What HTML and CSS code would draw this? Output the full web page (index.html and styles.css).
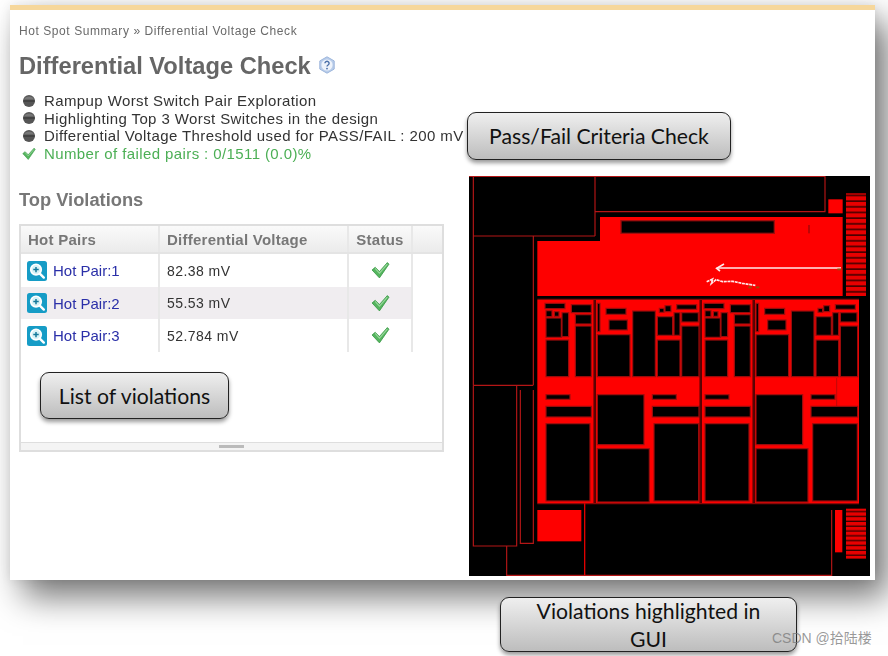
FILE: index.html
```html
<!DOCTYPE html>
<html lang="en">
<head>
<meta charset="utf-8">
<title>Differential Voltage Check</title>
<link rel="stylesheet" href="styles.css">
</head>
<body>
<svg class="defs" width="0" height="0" aria-hidden="true">
  <defs>
    <symbol id="bullet" viewBox="0 0 14 14"><circle cx="7" cy="7" r="6" fill="#555"/><path d="M2 5.5a5.2 4 0 0 1 10 0z" fill="#777"/><path d="M1.2 7h11.6" stroke="#333" stroke-width="1"/></symbol>
    <symbol id="check" viewBox="0 0 18 18"><path d="M1 8.5l3-2.5 4 4L15.5 1.5 17 3 8 16z" fill="#55b55f" stroke="#3c9a48" stroke-width=".8" stroke-linejoin="round"/><path d="M4 7l4 4.5L15.5 3" fill="none" stroke="#9ad89d" stroke-width="1"/></symbol>
    <symbol id="zoom" viewBox="0 0 20 20"><rect width="20" height="20" rx="2.5" fill="#169cc6"/><circle cx="9" cy="8.6" r="5.3" fill="#d8f2f6" stroke="#fff" stroke-width="1.6"/><path d="M6.3 8.6h5.4M9 5.9v5.4" stroke="#14799a" stroke-width="1.5"/><path d="M12.8 12.6l4 4" stroke="#fff" stroke-width="2.4" stroke-linecap="round"/></symbol>
    <pattern id="stripes-top" width="60" height="17" patternUnits="userSpaceOnUse"><rect width="60" height="17" fill="#e80000"/><rect y="12" width="60" height="5" fill="#4a0000"/></pattern>
    <pattern id="stripes-bottom" width="60" height="14.5" patternUnits="userSpaceOnUse"><rect width="60" height="14.5" fill="#e80000"/><rect y="10.5" width="60" height="4" fill="#3a0000"/></pattern>
    <g id="col-a">
      <rect x="255" y="40" width="60" height="16"/><rect x="334" y="44" width="60" height="24"/>
      <rect x="258" y="62" width="18" height="18"/><rect x="283" y="65" width="14" height="14"/>
      <rect x="258" y="84" width="46" height="58"/><rect x="306" y="68" width="20" height="72"/>
      <rect x="346" y="74" width="48" height="28"/><rect x="346" y="108" width="48" height="152"/>
      <rect x="258" y="150" width="68" height="110"/><rect x="258" y="314" width="72" height="14"/>
      <rect x="258" y="349" width="136" height="32"/><rect x="258" y="401" width="132" height="232"/>
    </g>
    <g id="col-b">
      <rect x="412" y="40" width="8" height="85"/><rect x="438" y="55" width="60" height="18"/>
      <rect x="447" y="90" width="55" height="30"/><rect x="518" y="63" width="68" height="197"/>
      <rect x="412" y="134" width="98" height="126"/><rect x="598" y="55" width="14" height="12"/>
      <rect x="615" y="47" width="18" height="18"/><rect x="650" y="44" width="60" height="14"/>
      <rect x="592" y="80" width="46" height="56"/><rect x="642" y="68" width="18" height="68"/>
      <rect x="665" y="68" width="50" height="28"/><rect x="665" y="108" width="52" height="152"/>
      <rect x="592" y="150" width="68" height="110"/><rect x="412" y="314" width="140" height="150"/>
      <rect x="577" y="314" width="72" height="14"/><rect x="577" y="349" width="140" height="32"/>
      <rect x="412" y="476" width="156" height="160"/><rect x="582" y="401" width="134" height="232"/>
    </g>
  </defs>
</svg>

<div class="page">
  <main class="sheet">
    <section class="report">
      <p class="crumbs">Hot Spot Summary » Differential Voltage Check</p>
      <h1 class="title">Differential Voltage Check
        <svg class="help" viewBox="0 0 18 18" aria-hidden="true"><path d="M9 .8l7.2 4.1v8.2L9 17.2 1.8 13.1V4.9z" fill="#b9cdea" stroke="#9db6dc"/><circle cx="9" cy="9" r="5.6" fill="#eef3fb"/><path d="M6.9 7.2a2.1 2 0 1 1 3.2 1.8c-.8.5-1.1.8-1.1 1.6" fill="none" stroke="#4a6fa8" stroke-width="1.4"/><circle cx="9" cy="12.6" r=".9" fill="#4a6fa8"/></svg>
      </h1>
      <ul class="facts">
        <li class="fact"><svg class="fact-icon"><use href="#bullet"/></svg>Rampup Worst Switch Pair Exploration</li>
        <li class="fact"><svg class="fact-icon"><use href="#bullet"/></svg>Highlighting Top 3 Worst Switches in the design</li>
        <li class="fact"><svg class="fact-icon"><use href="#bullet"/></svg>Differential Voltage Threshold used for PASS/FAIL : 200 mV</li>
        <li class="fact fact-ok"><svg class="fact-icon"><use href="#check"/></svg>Number of failed pairs : 0/1511 (0.0)%</li>
      </ul>
      <h2 class="subtitle">Top Violations</h2>
      <div class="grid-panel">
        <div class="grid-body">
          <div class="grid-row grid-head">
            <div class="cell">Hot Pairs</div><div class="cell">Differential Voltage</div><div class="cell cell-center">Status</div><div class="cell cell-pad"></div>
          </div>
          <div class="grid-row">
            <div class="cell cell-link"><svg class="zoom-icon"><use href="#zoom"/></svg><a class="pair-link">Hot Pair:1</a></div><div class="cell">82.38 mV</div><div class="cell cell-center"><svg class="status-icon"><use href="#check"/></svg></div>
          </div>
          <div class="grid-row grid-row-alt">
            <div class="cell cell-link"><svg class="zoom-icon"><use href="#zoom"/></svg><a class="pair-link">Hot Pair:2</a></div><div class="cell">55.53 mV</div><div class="cell cell-center"><svg class="status-icon"><use href="#check"/></svg></div>
          </div>
          <div class="grid-row">
            <div class="cell cell-link"><svg class="zoom-icon"><use href="#zoom"/></svg><a class="pair-link">Hot Pair:3</a></div><div class="cell">52.784 mV</div><div class="cell cell-center"><svg class="status-icon"><use href="#check"/></svg></div>
          </div>
        </div>
        <div class="grid-foot"><span class="grip"></span></div>
      </div>
    </section>

    <svg class="chip" viewBox="0 0 1203 1200" aria-label="Layout view with violations highlighted in red">
      <rect width="1203" height="1200" fill="#000"/>
      <g transform="translate(-27,-228)">
        <g fill="none" stroke="#b41616" stroke-width="3.5">
          <path d="M27 229H1095V335H405M405 229V408M40 229V855M40 408H405M220 408V855"/>
        </g>
        <rect x="1105" y="298" width="43" height="42" fill="#fe0000"/>
        <rect x="1158" y="280" width="60" height="308" fill="url(#stripes-top)"/>
        <path d="M420 351H1148V588H232V423H420z" fill="#fe0000"/>
        <rect x="483" y="362" width="460" height="38" fill="#000" stroke="#a00c0c" stroke-width="4"/>
        <path d="M1047 375v25" stroke="#7a0a0a" stroke-width="3"/>
        <path d="M770 504H1143" stroke="#ffeaea" stroke-width="4.5"/>
        <path d="M792 492L770 505l10 8" fill="none" stroke="#ffeaea" stroke-width="5"/>
        <path d="M740 545l18-8-4 14 14-12 20 6 30-1 28 6 40 6" fill="none" stroke="#ffeaea" stroke-width="5" stroke-dasharray="9 2"/>
        <path d="M1132 508h12M865 562h10M888 562h10" stroke="#96500a" stroke-width="5"/>
      </g>
      <g transform="translate(-27,342)">
        <rect x="232" y="30" width="965" height="610" fill="#fe0000"/>
        <g fill="#000" stroke="#a00c0c" stroke-width="3.5">
          <use href="#col-a"/>
          <use href="#col-b"/>
          <use href="#col-a" transform="translate(477,0)"/>
          <use href="#col-b" transform="translate(476,0)"/>
        </g>
        <path d="M404 30V642M722 30V642M881 30V642" stroke="#000" stroke-width="6"/>
        <path d="M404 30V642M722 30V642M881 30V642M1130 264V348" stroke="#a00c0c" stroke-width="2"/>
        <path d="M232 28H1197M232 641H1197" stroke="#8a0808" stroke-width="3.5"/>
        <g fill="none" stroke="#b41616" stroke-width="3.5">
          <path d="M40 286H220M40 286V768H170V286M181 300V760H220V300"/>
          <path d="M140 768V856H1115V660"/>
        </g>
        <path d="M374 640V856" stroke="#e00000" stroke-width="4"/>
        <rect x="232" y="660" width="132" height="94" fill="#fe0000"/>
        <rect x="1125" y="660" width="22" height="127" fill="#fe0000"/>
        <rect x="1158" y="656" width="60" height="150" fill="url(#stripes-bottom)"/>
      </g>
    </svg>
  </main>

  <div class="callout callout-criteria">Pass/Fail Criteria Check</div>
  <div class="callout callout-list">List of violations</div>
  <div class="callout callout-gui">Violations highlighted in GUI</div>
  <div class="watermark">CSDN @拾陆楼</div>
</div>
</body>
</html>
```

FILE: styles.css
```css
* { box-sizing: border-box; }
html, body { margin: 0; padding: 0; background: #fff; }
body { font-family: "Liberation Sans", Arial, sans-serif; overflow: hidden; }
.defs { position: absolute; }
.page { position: relative; width: 888px; height: 656px; overflow: hidden; padding: 5px 13px 0 10px; }

.sheet {
  display: flex;
  align-items: flex-start;
  gap: 25px;
  height: 575px;
  padding: 0 5px 0 9px;
  background: #fff;
  border-top: 5px solid #f6d79b;
  box-shadow: 13px 17px 32px rgba(0, 0, 0, .54), 0 0 10px rgba(0, 0, 0, .08);
}

.report { flex: 0 0 425px; min-width: 0; filter: blur(.4px); }
.crumbs { margin: 13px 0 0; font-size: 12px; line-height: 16px; color: #6a6a6a; letter-spacing: .57px; white-space: nowrap; }
.title { display: flex; align-items: center; gap: 7px; margin: 13px 0 0; font-size: 23.7px; line-height: 28px; font-weight: 700; color: #666; white-space: nowrap; }
.help { width: 18px; height: 18px; margin-top: -3px; }

.facts { list-style: none; margin: 12px 0 0; padding: 0; }
.fact { display: flex; align-items: center; height: 17.6px; padding-left: 3px; font-size: 15px; color: #333; letter-spacing: .4px; white-space: nowrap; }
.fact-ok { color: #4caf55; }
.fact-icon { flex: none; width: 14px; height: 14px; margin-right: 8px; }

.subtitle { margin: 27px 0 0; font-size: 18.3px; line-height: 22px; font-weight: 700; color: #777; }

.grid-panel { display: flex; flex-direction: column; height: 228px; margin-top: 13px; border: 2px solid #dedede; }
.grid-body { flex: 1; }
.grid-row { display: grid; grid-template-columns: 139px 189px 64px; height: 32.5px; }
.grid-head { grid-template-columns: 139px 189px 64px 1fr; height: 28px; border-bottom: 2px solid #e4e4e4; background: linear-gradient(#fafafa, #ebebeb); }
.grid-row-alt { width: 392px; background: #f0edf0; }
.cell { display: flex; align-items: center; padding-left: 7px; border-right: 2px solid #e8e8e8; font-size: 14px; color: #333; letter-spacing: .45px; }
.grid-head .cell { color: #777; font-size: 15px; font-weight: 700; letter-spacing: .25px; }
.cell-link { padding-left: 6px; }
.cell-center { justify-content: center; padding-left: 0; }
.grid-head .cell-center { padding-left: 0; }
.cell-pad { border-right: 0; }
.zoom-icon { flex: none; width: 20px; height: 20px; margin-right: 6px; }
.status-icon { width: 19px; height: 19px; }
.pair-link { color: #2a2fa8; font-size: 15px; letter-spacing: 0; }
.grid-foot { display: flex; justify-content: center; align-items: center; height: 8px; border-top: 1px solid #dedede; background: #f4f4f4; }
.grip { width: 25px; height: 3px; background: #bbb; }

.chip { flex: 0 0 401px; width: 401px; height: 400px; margin-top: 166px; filter: blur(.35px); }

.callout {
  position: absolute;
  display: flex;
  align-items: center;
  justify-content: center;
  text-align: center;
  font-family: Lato, "Open Sans", sans-serif;
  font-size: 21.2px;
  line-height: 28px;
  color: #111;
  background: linear-gradient(#efefef, #bdbdbd);
  border: 1.5px solid #222;
  border-radius: 9px;
  box-shadow: 0 3px 4px rgba(0, 0, 0, .4);
}
.callout-criteria { left: 467px; top: 112px; width: 264px; height: 48px; }
.callout-list { left: 40px; top: 372px; width: 189px; height: 47px; }
.callout-gui { left: 500px; top: 597px; width: 297px; height: 55px; padding: 0 30px; }

.watermark { position: absolute; left: 772px; top: 629px; font-family: "Liberation Sans", "Noto Sans CJK SC", sans-serif; font-size: 14px; line-height: 18px; color: rgba(120, 120, 120, .75); white-space: nowrap; }
```
